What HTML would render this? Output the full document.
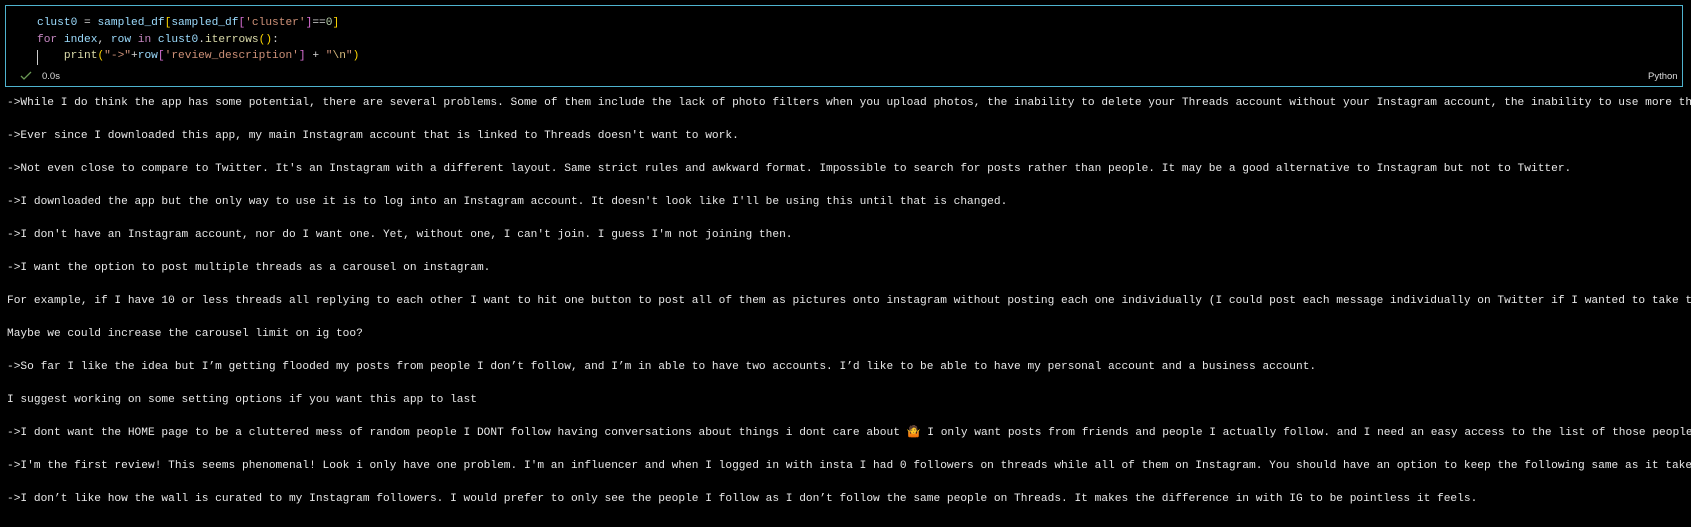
<!DOCTYPE html>
<html><head><meta charset="utf-8"><style>
html,body{margin:0;padding:0;background:#000;width:1691px;height:527px;overflow:hidden;}
body{position:relative;font-family:"Liberation Mono","DejaVu Sans Mono",monospace;}
.box{position:absolute;left:5px;top:5px;width:1676px;height:80px;border:1px solid #4fb3cf;background:#000;}
.code{position:absolute;left:37px;font-size:11.2px;white-space:pre;color:#d4d4d4;line-height:16px;}
.v{color:#9cdcfe}.y{color:#ffd700}.p{color:#da70d6}.s{color:#ce9178}.k{color:#c586c0}.f{color:#dcdcaa}.n{color:#b5cea8}.e{color:#d7ba7d}
.out{position:absolute;left:7px;font-size:11.2px;white-space:pre;color:#e8e8e8;line-height:16px;width:1684px;overflow:hidden;}
.small{position:absolute;font-family:"Liberation Sans",sans-serif;font-size:9.5px;color:#ddd;}
</style></head><body>
<div class="box"></div>
<div class="code" style="top:15px"><span class="v">clust0</span> = <span class="v">sampled_df</span><span class="y">[</span><span class="v">sampled_df</span><span class="p">[</span><span class="s">'cluster'</span><span class="p">]</span>==<span class="n">0</span><span class="y">]</span></div>
<div class="code" style="top:32px"><span class="k">for</span> <span class="v">index</span>, <span class="v">row</span> <span class="k">in</span> <span class="v">clust0</span>.<span class="f">iterrows</span><span class="y">()</span>:</div>
<div class="code" style="top:48px">    <span class="f">print</span><span class="y">(</span><span class="s">"-&gt;"</span>+<span class="v">row</span><span class="p">[</span><span class="s">'review_description'</span><span class="p">]</span> + <span class="s">"</span><span class="e">\n</span><span class="s">"</span><span class="y">)</span></div>
<div style="position:absolute;left:37px;top:50px;width:1px;height:15px;background:#ccc"></div>
<svg style="position:absolute;left:20px;top:71px" width="12" height="10"><path d="M1 5 L4 8 L11 1" stroke="#6a9955" stroke-width="1.3" fill="none"/></svg>
<div class="small" style="left:42px;top:71px">0.0s</div>
<div class="small" style="left:1648px;top:71px">Python</div>

<div class="out" style="top:95px">-&gt;While I do think the app has some potential, there are several problems. Some of them include the lack of photo filters when you upload photos, the inability to delete your Threads account without your Instagram account, the inability to use more than</div>
<div class="out" style="top:128px">-&gt;Ever since I downloaded this app, my main Instagram account that is linked to Threads doesn't want to work.</div>
<div class="out" style="top:161px">-&gt;Not even close to compare to Twitter. It's an Instagram with a different layout. Same strict rules and awkward format. Impossible to search for posts rather than people. It may be a good alternative to Instagram but not to Twitter.</div>
<div class="out" style="top:194px">-&gt;I downloaded the app but the only way to use it is to log into an Instagram account. It doesn't look like I'll be using this until that is changed.</div>
<div class="out" style="top:227px">-&gt;I don't have an Instagram account, nor do I want one. Yet, without one, I can't join. I guess I'm not joining then.</div>
<div class="out" style="top:260px">-&gt;I want the option to post multiple threads as a carousel on instagram.</div>
<div class="out" style="top:293px">For example, if I have 10 or less threads all replying to each other I want to hit one button to post all of them as pictures onto instagram without posting each one individually (I could post each message individually on Twitter if I wanted to take the</div>
<div class="out" style="top:326px">Maybe we could increase the carousel limit on ig too?</div>
<div class="out" style="top:359px">-&gt;So far I like the idea but I’m getting flooded my posts from people I don’t follow, and I’m in able to have two accounts. I’d like to be able to have my personal account and a business account.</div>
<div class="out" style="top:392px">I suggest working on some setting options if you want this app to last</div>
<div class="out" style="top:425px">-&gt;I dont want the HOME page to be a cluttered mess of random people I DONT follow having conversations about things i dont care about <span style="color:#e8a030">🤷</span> I only want posts from friends and people I actually follow. and I need an easy access to the list of those people</div>
<div class="out" style="top:458px">-&gt;I'm the first review! This seems phenomenal! Look i only have one problem. I'm an influencer and when I logged in with insta I had 0 followers on threads while all of them on Instagram. You should have an option to keep the following same as it takes</div>
<div class="out" style="top:491px">-&gt;I don’t like how the wall is curated to my Instagram followers. I would prefer to only see the people I follow as I don’t follow the same people on Threads. It makes the difference in with IG to be pointless it feels.</div>
</body></html>
